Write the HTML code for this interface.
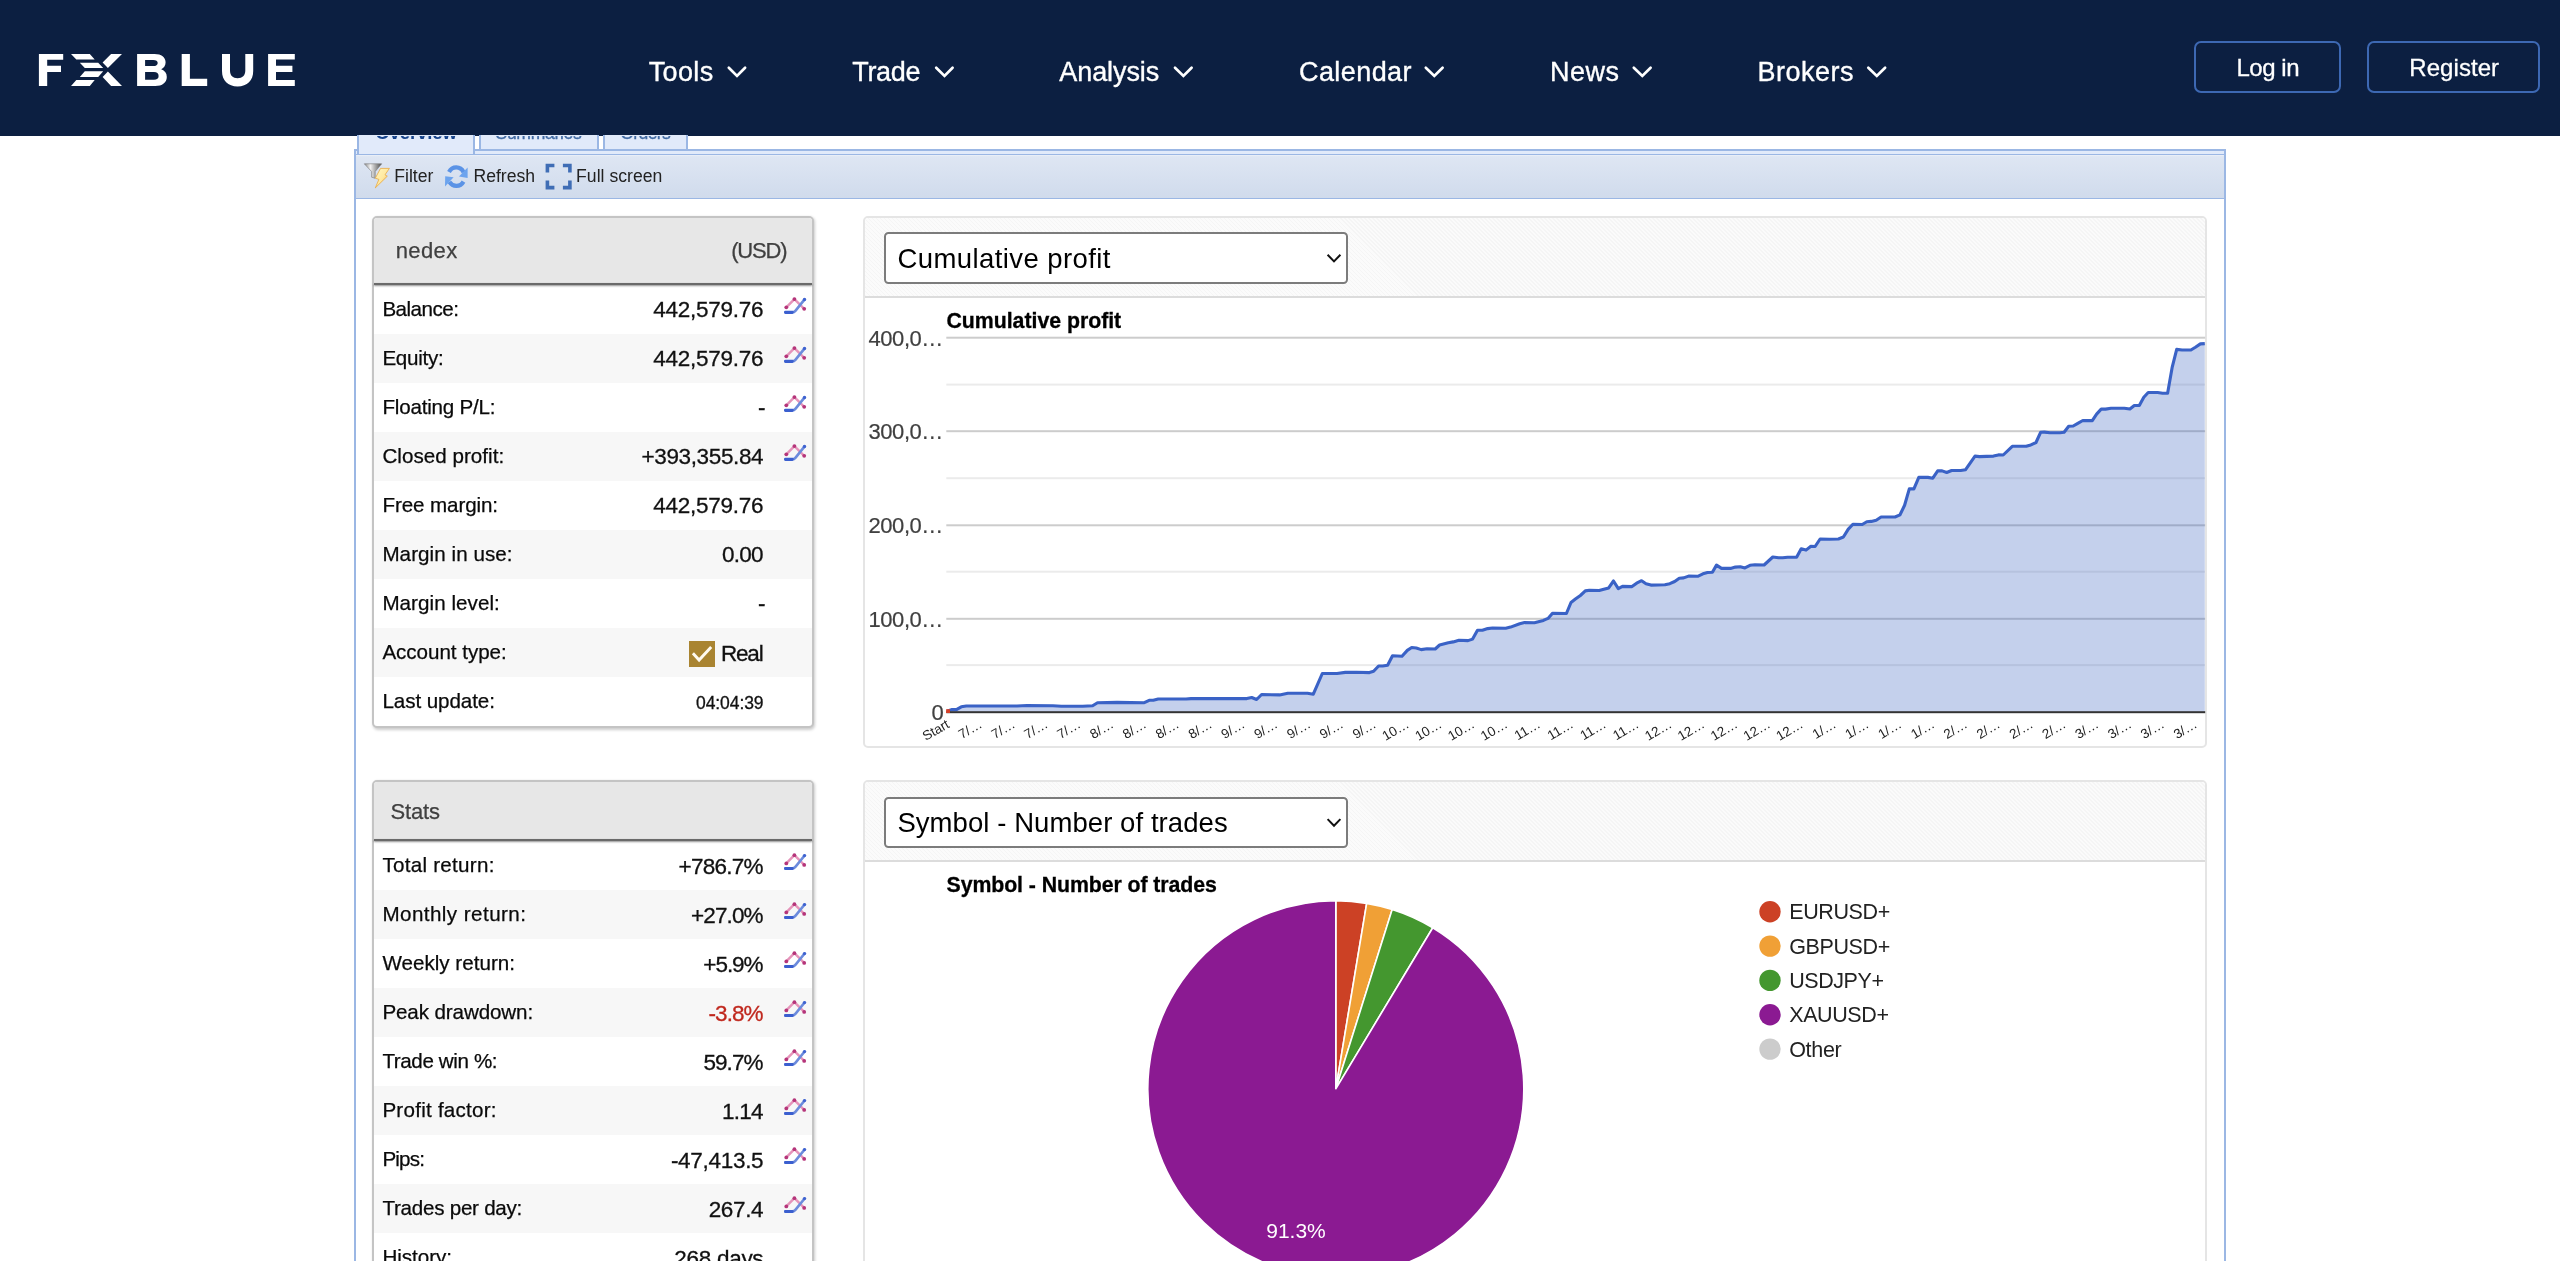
<!DOCTYPE html>
<html><head><meta charset="utf-8"><title>FX Blue - nedex</title><style>
html,body{margin:0;padding:0;background:#fff;overflow:hidden;}
body{width:2560px;height:1261px;overflow:hidden;position:relative;font-family:'Liberation Sans',sans-serif;}
.b{position:absolute;box-sizing:content-box;}
.t{position:absolute;white-space:pre;line-height:1;font-family:'Liberation Sans',sans-serif;}
svg text{font-family:'Liberation Sans',sans-serif;}
</style></head>
<body>
<div id="page" style="position:absolute;left:0;top:0;width:2560px;height:1261px;overflow:hidden;will-change:transform;background:#fff">
<div class="b" style="left:0px;top:0px;width:2560px;height:135.6px;background:#0c1f41;"></div>
<div class="t" style="left:648.70px;top:59px;font-size:27px;font-weight:400;color:#fff;letter-spacing:0.364px;-webkit-text-stroke:.35px #fff;">Tools</div>
<div class="t" style="left:852.20px;top:59px;font-size:27px;font-weight:400;color:#fff;letter-spacing:-0.281px;-webkit-text-stroke:.35px #fff;">Trade</div>
<div class="t" style="left:1059.30px;top:59px;font-size:27px;font-weight:400;color:#fff;letter-spacing:-0.087px;-webkit-text-stroke:.35px #fff;">Analysis</div>
<div class="t" style="left:1299.00px;top:59px;font-size:27px;font-weight:400;color:#fff;letter-spacing:0.421px;-webkit-text-stroke:.35px #fff;">Calendar</div>
<div class="t" style="left:1550.00px;top:59px;font-size:27px;font-weight:400;color:#fff;letter-spacing:0.500px;-webkit-text-stroke:.35px #fff;">News</div>
<div class="t" style="left:1757.50px;top:59px;font-size:27px;font-weight:400;color:#fff;letter-spacing:0.497px;-webkit-text-stroke:.35px #fff;">Brokers</div>
<div class="b" style="left:2194.4px;top:40.8px;width:142.4px;height:48.3px;border:2px solid #3d68b3;border-radius:7px;"></div>
<div class="b" style="left:2367px;top:40.8px;width:169px;height:48.3px;border:2px solid #3d68b3;border-radius:7px;"></div>
<div class="t" style="left:2236.40px;top:56px;font-size:24px;font-weight:400;color:#fff;letter-spacing:-0.460px;-webkit-text-stroke:.3px #fff;">Log in</div>
<div class="t" style="left:2409.30px;top:56px;font-size:24px;font-weight:400;color:#fff;letter-spacing:0.057px;-webkit-text-stroke:.3px #fff;">Register</div>
<div class="b" style="left:355px;top:148.9px;width:1870px;height:1.7px;background:#9bb7e4;"></div>
<div class="b" style="left:355px;top:150.6px;width:1870px;height:3.0px;background:#e1eafa;"></div>
<div class="b" style="left:355px;top:153.6px;width:1870px;height:1.7px;background:#9bb7e4;"></div>
<div class="b" style="left:357px;top:135px;width:117.5px;height:18.6px;background:#e1eafa;border-left:2px solid #9bb7e4;border-right:2px solid #9bb7e4;box-sizing:border-box;"></div>
<div class="b" style="left:478.7px;top:135px;width:120px;height:15.6px;background:#e1eafa;border:2px solid #9bb7e4;border-top:none;box-sizing:border-box;"></div>
<div class="b" style="left:603.2px;top:135px;width:85.2px;height:15.6px;background:#e1eafa;border:2px solid #9bb7e4;border-top:none;box-sizing:border-box;"></div>
<div style="position:absolute;left:0;top:135.6px;width:2560px;height:12px;overflow:hidden"><div style="position:absolute;left:0;top:-135.6px">
<div class="t" style="left:375.30px;top:124px;font-size:18.6px;font-weight:700;color:#15428b;letter-spacing:-0.153px;">Overview</div>
<div class="t" style="left:495.50px;top:125px;font-size:17.6px;font-weight:400;color:#416aa3;letter-spacing:-0.339px;-webkit-text-stroke:.3px #416aa3;">Summaries</div>
<div class="t" style="left:620.30px;top:125px;font-size:17.6px;font-weight:400;color:#416aa3;letter-spacing:-0.654px;-webkit-text-stroke:.3px #416aa3;">Orders</div>
</div></div>
<div class="b" style="left:355px;top:155.3px;width:1870px;height:42.5px;background:linear-gradient(#edf1f9 0,#dee6f3 4%,#d0dbec 100%);"></div>
<div class="b" style="left:355px;top:197.8px;width:1870px;height:1.7px;background:#9bb7e4;"></div>
<div class="b" style="left:354.1px;top:149px;width:1.9px;height:1112px;background:#9bb7e4;"></div>
<div class="b" style="left:2223.5px;top:149px;width:2px;height:1112px;background:#9bb7e4;"></div>
<div class="t" style="left:394.20px;top:168px;font-size:17.6px;font-weight:400;color:#222;letter-spacing:0.017px;">Filter</div>
<div class="t" style="left:473.60px;top:168px;font-size:17.6px;font-weight:400;color:#222;letter-spacing:-0.041px;">Refresh</div>
<div class="t" style="left:576.10px;top:168px;font-size:17.6px;font-weight:400;color:#222;letter-spacing:0.024px;">Full screen</div>
<div class="b" style="left:372px;top:216px;width:438px;height:508px;border:2px solid #c4c4c4;border-radius:5px;box-shadow:1px 1.5px 3px rgba(0,0,0,.2);background:#fff;"></div>
<div class="b" style="left:374px;top:218px;width:438px;height:65.4px;background:#e7e7e7;border-radius:3px 3px 0 0;"></div>
<div class="b" style="left:374px;top:282.79999999999995px;width:438px;height:2px;background:#6a6a6a;box-shadow:0 1px 2px rgba(0,0,0,.45);"></div>
<div class="t" style="left:395.70px;top:240px;font-size:22px;font-weight:400;color:#404040;letter-spacing:0.387px;-webkit-text-stroke:.25px #404040;">nedex</div>
<div class="t" style="left:731.20px;top:240px;font-size:22px;font-weight:400;color:#404040;letter-spacing:-1.200px;-webkit-text-stroke:.25px #404040;">(USD)</div>
<div class="t" style="left:382.40px;top:299px;font-size:20.6px;font-weight:400;color:#0a0a0a;letter-spacing:-0.512px;-webkit-text-stroke:.25px #0a0a0a;">Balance:</div>
<div class="t" style="left:653.30px;top:299px;font-size:22.5px;font-weight:400;color:#111;letter-spacing:-0.257px;-webkit-text-stroke:.3px #111;">442,579.76</div>
<div class="b" style="left:374px;top:333.59999999999997px;width:438px;height:49px;background:#f7f7f7;"></div>
<div class="t" style="left:382.40px;top:348px;font-size:20.6px;font-weight:400;color:#0a0a0a;letter-spacing:-0.264px;-webkit-text-stroke:.25px #0a0a0a;">Equity:</div>
<div class="t" style="left:653.30px;top:348px;font-size:22.5px;font-weight:400;color:#111;letter-spacing:-0.257px;-webkit-text-stroke:.3px #111;">442,579.76</div>
<div class="t" style="left:382.40px;top:397px;font-size:20.6px;font-weight:400;color:#0a0a0a;letter-spacing:-0.206px;-webkit-text-stroke:.25px #0a0a0a;">Floating P/L:</div>
<div class="t" style="left:758.00px;top:397px;font-size:22.5px;font-weight:400;color:#111;letter-spacing:0.000px;-webkit-text-stroke:.3px #111;">-</div>
<div class="b" style="left:374px;top:431.59999999999997px;width:438px;height:49px;background:#f7f7f7;"></div>
<div class="t" style="left:382.40px;top:446px;font-size:20.6px;font-weight:400;color:#0a0a0a;letter-spacing:0.032px;-webkit-text-stroke:.25px #0a0a0a;">Closed profit:</div>
<div class="t" style="left:641.50px;top:446px;font-size:22.5px;font-weight:400;color:#111;letter-spacing:-0.367px;-webkit-text-stroke:.3px #111;">+393,355.84</div>
<div class="t" style="left:382.40px;top:495px;font-size:20.6px;font-weight:400;color:#0a0a0a;letter-spacing:-0.095px;-webkit-text-stroke:.25px #0a0a0a;">Free margin:</div>
<div class="t" style="left:653.30px;top:495px;font-size:22.5px;font-weight:400;color:#111;letter-spacing:-0.257px;-webkit-text-stroke:.3px #111;">442,579.76</div>
<div class="b" style="left:374px;top:529.5999999999999px;width:438px;height:49px;background:#f7f7f7;"></div>
<div class="t" style="left:382.40px;top:544px;font-size:20.6px;font-weight:400;color:#0a0a0a;letter-spacing:0.064px;-webkit-text-stroke:.25px #0a0a0a;">Margin in use:</div>
<div class="t" style="left:721.90px;top:544px;font-size:22.5px;font-weight:400;color:#111;letter-spacing:-0.706px;-webkit-text-stroke:.3px #111;">0.00</div>
<div class="t" style="left:382.40px;top:593px;font-size:20.6px;font-weight:400;color:#0a0a0a;letter-spacing:0.050px;-webkit-text-stroke:.25px #0a0a0a;">Margin level:</div>
<div class="t" style="left:758.00px;top:593px;font-size:22.5px;font-weight:400;color:#111;letter-spacing:0.000px;-webkit-text-stroke:.3px #111;">-</div>
<div class="b" style="left:374px;top:627.5999999999999px;width:438px;height:49px;background:#f7f7f7;"></div>
<div class="t" style="left:382.40px;top:642px;font-size:20.6px;font-weight:400;color:#0a0a0a;letter-spacing:-0.036px;-webkit-text-stroke:.25px #0a0a0a;">Account type:</div>
<div class="t" style="left:721.00px;top:643px;font-size:22.5px;font-weight:400;color:#111;letter-spacing:-1.200px;-webkit-text-stroke:.3px #111;">Real</div>
<div class="t" style="left:382.40px;top:691px;font-size:20.6px;font-weight:400;color:#0a0a0a;letter-spacing:-0.073px;-webkit-text-stroke:.25px #0a0a0a;">Last update:</div>
<div class="t" style="left:696.00px;top:695px;font-size:17.5px;font-weight:400;color:#111;letter-spacing:-0.074px;-webkit-text-stroke:.3px #111;">04:04:39</div>
<div class="b" style="left:688.9px;top:641.2px;width:25.8px;height:25.8px;background:#a98431;"></div>
<div class="b" style="left:372px;top:780px;width:438px;height:596px;border:2px solid #c4c4c4;border-radius:5px;box-shadow:1px 1.5px 3px rgba(0,0,0,.2);background:#fff;"></div>
<div class="b" style="left:374px;top:782px;width:438px;height:57.5px;background:#e7e7e7;border-radius:3px 3px 0 0;"></div>
<div class="b" style="left:374px;top:838.9px;width:438px;height:2px;background:#6a6a6a;box-shadow:0 1px 2px rgba(0,0,0,.45);"></div>
<div class="t" style="left:390.50px;top:801px;font-size:22px;font-weight:400;color:#404040;letter-spacing:-0.165px;-webkit-text-stroke:.25px #404040;">Stats</div>
<div class="t" style="left:382.40px;top:855px;font-size:20.6px;font-weight:400;color:#0a0a0a;letter-spacing:0.269px;-webkit-text-stroke:.25px #0a0a0a;">Total return:</div>
<div class="t" style="left:678.60px;top:856px;font-size:22.5px;font-weight:400;color:#111;letter-spacing:-0.740px;-webkit-text-stroke:.3px #111;">+786.7%</div>
<div class="b" style="left:374px;top:889.7px;width:438px;height:49px;background:#f7f7f7;"></div>
<div class="t" style="left:382.40px;top:904px;font-size:20.6px;font-weight:400;color:#0a0a0a;letter-spacing:0.443px;-webkit-text-stroke:.25px #0a0a0a;">Monthly return:</div>
<div class="t" style="left:691.00px;top:905px;font-size:22.5px;font-weight:400;color:#111;letter-spacing:-0.870px;-webkit-text-stroke:.3px #111;">+27.0%</div>
<div class="t" style="left:382.40px;top:953px;font-size:20.6px;font-weight:400;color:#0a0a0a;letter-spacing:0.015px;-webkit-text-stroke:.25px #0a0a0a;">Weekly return:</div>
<div class="t" style="left:703.30px;top:954px;font-size:22.5px;font-weight:400;color:#111;letter-spacing:-1.027px;-webkit-text-stroke:.3px #111;">+5.9%</div>
<div class="b" style="left:374px;top:987.7px;width:438px;height:49px;background:#f7f7f7;"></div>
<div class="t" style="left:382.40px;top:1002px;font-size:20.6px;font-weight:400;color:#0a0a0a;letter-spacing:-0.114px;-webkit-text-stroke:.25px #0a0a0a;">Peak drawdown:</div>
<div class="t" style="left:708.50px;top:1003px;font-size:22.5px;font-weight:400;color:#c0281e;letter-spacing:-0.920px;-webkit-text-stroke:.3px #c0281e;">-3.8%</div>
<div class="t" style="left:382.40px;top:1051px;font-size:20.6px;font-weight:400;color:#0a0a0a;letter-spacing:-0.384px;-webkit-text-stroke:.25px #0a0a0a;">Trade win %:</div>
<div class="t" style="left:703.40px;top:1052px;font-size:22.5px;font-weight:400;color:#111;letter-spacing:-0.897px;-webkit-text-stroke:.3px #111;">59.7%</div>
<div class="b" style="left:374px;top:1085.7px;width:438px;height:49px;background:#f7f7f7;"></div>
<div class="t" style="left:382.40px;top:1100px;font-size:20.6px;font-weight:400;color:#0a0a0a;letter-spacing:0.244px;-webkit-text-stroke:.25px #0a0a0a;">Profit factor:</div>
<div class="t" style="left:722.10px;top:1101px;font-size:22.5px;font-weight:400;color:#111;letter-spacing:-0.773px;-webkit-text-stroke:.3px #111;">1.14</div>
<div class="t" style="left:382.40px;top:1149px;font-size:20.6px;font-weight:400;color:#0a0a0a;letter-spacing:-0.796px;-webkit-text-stroke:.25px #0a0a0a;">Pips:</div>
<div class="t" style="left:670.90px;top:1150px;font-size:22.5px;font-weight:400;color:#111;letter-spacing:-0.295px;-webkit-text-stroke:.3px #111;">-47,413.5</div>
<div class="b" style="left:374px;top:1183.7px;width:438px;height:49px;background:#f7f7f7;"></div>
<div class="t" style="left:382.40px;top:1198px;font-size:20.6px;font-weight:400;color:#0a0a0a;letter-spacing:-0.252px;-webkit-text-stroke:.25px #0a0a0a;">Trades per day:</div>
<div class="t" style="left:708.70px;top:1199px;font-size:22.5px;font-weight:400;color:#111;letter-spacing:-0.352px;-webkit-text-stroke:.3px #111;">267.4</div>
<div class="t" style="left:382.40px;top:1247px;font-size:20.6px;font-weight:400;color:#0a0a0a;letter-spacing:-0.019px;-webkit-text-stroke:.25px #0a0a0a;">History:</div>
<div class="t" style="left:674.30px;top:1248px;font-size:22.5px;font-weight:400;color:#111;letter-spacing:-0.285px;-webkit-text-stroke:.3px #111;">268 days</div>
<div class="b" style="left:863px;top:216px;width:1340px;height:527.6px;border:2px solid #e5e5e5;border-radius:5px;background:#fff;"></div>
<div class="b" style="left:865px;top:218px;width:1340px;height:78.19999999999999px;background:repeating-linear-gradient(45deg,#f5f5f5 0,#f5f5f5 1.2px,#fbfbfb 1.2px,#fbfbfb 2.83px);border-bottom:2px solid #dcdcdc;border-radius:3px 3px 0 0;"></div>
<div class="b" style="left:884.4px;top:232px;width:459.8px;height:48px;border:2px solid #7c7c7c;border-radius:4.5px;background:#fff;"></div>
<div class="t" style="left:897.40px;top:245px;font-size:27.5px;font-weight:400;color:#000;letter-spacing:0.418px;">Cumulative profit</div>
<div class="b" style="left:863px;top:780px;width:1340px;height:596px;border:2px solid #e5e5e5;border-radius:5px;background:#fff;"></div>
<div class="b" style="left:865px;top:782px;width:1340px;height:78.39999999999998px;background:repeating-linear-gradient(45deg,#f5f5f5 0,#f5f5f5 1.2px,#fbfbfb 1.2px,#fbfbfb 2.83px);border-bottom:2px solid #dcdcdc;border-radius:3px 3px 0 0;"></div>
<div class="b" style="left:884.4px;top:796.6px;width:459.8px;height:47.39999999999998px;border:2px solid #7c7c7c;border-radius:4.5px;background:#fff;"></div>
<div class="t" style="left:897.40px;top:809px;font-size:27.5px;font-weight:400;color:#000;letter-spacing:0.070px;">Symbol - Number of trades</div>
<div class="t" style="left:946.50px;top:311px;font-size:21.3px;font-weight:700;color:#000;letter-spacing:-0.027px;-webkit-text-stroke:.3px #000;">Cumulative profit</div>
<div class="t" style="left:946.50px;top:875px;font-size:21.3px;font-weight:700;color:#000;letter-spacing:-0.076px;-webkit-text-stroke:.3px #000;">Symbol - Number of trades</div>
<div class="t" style="left:868.60px;top:328px;font-size:22px;font-weight:400;color:#404040;letter-spacing:-0.471px;-webkit-text-stroke:.2px #404040;">400,0…</div>
<div class="t" style="left:868.60px;top:421px;font-size:22px;font-weight:400;color:#404040;letter-spacing:-0.471px;-webkit-text-stroke:.2px #404040;">300,0…</div>
<div class="t" style="left:868.60px;top:515px;font-size:22px;font-weight:400;color:#404040;letter-spacing:-0.471px;-webkit-text-stroke:.2px #404040;">200,0…</div>
<div class="t" style="left:868.60px;top:609px;font-size:22px;font-weight:400;color:#404040;letter-spacing:-0.471px;-webkit-text-stroke:.2px #404040;">100,0…</div>
<div class="t" style="left:931.40px;top:702px;font-size:22px;font-weight:400;color:#404040;letter-spacing:0.000px;-webkit-text-stroke:.2px #404040;">0</div>
<div class="t" style="left:1789.20px;top:902px;font-size:21.5px;font-weight:400;color:#222;letter-spacing:-0.377px;">EURUSD+</div>
<div class="t" style="left:1789.20px;top:937px;font-size:21.5px;font-weight:400;color:#222;letter-spacing:-0.377px;">GBPUSD+</div>
<div class="t" style="left:1789.20px;top:971px;font-size:21.5px;font-weight:400;color:#222;letter-spacing:-0.433px;">USDJPY+</div>
<div class="t" style="left:1789.20px;top:1005px;font-size:21.5px;font-weight:400;color:#222;letter-spacing:-0.396px;">XAUUSD+</div>
<div class="t" style="left:1789.20px;top:1040px;font-size:21.5px;font-weight:400;color:#222;letter-spacing:-0.312px;">Other</div>
<svg style="position:absolute;left:0;top:0" width="2560" height="1261" viewBox="0 0 2560 1261">
<path fill="#fff" fill-rule="evenodd" d="M38.9 53.9H63.2V59.7H47.2V65.8H61V72.1H47.2V85.9H38.9Z M71 54.1H89.8L94.7 59.6H76.3Z M79.8 62.8H98.2L103.2 68.1H84.8Z M84.8 71.3H103.2L98.2 76.9H79.8Z M76.3 80.1H94.7L89.8 85.9H71Z M111.1 54.1H122L107.9 68L102.6 62.6Z M102.6 76.9L107.9 71.6L122 85.9H111.1Z M137.1 53.9H154.5C161.5 53.9 165.6 57.3 165.6 62.3C165.6 65.6 164 68 161.2 69.2C164.9 70.4 166.8 73.2 166.8 76.9C166.8 82.5 162.3 85.9 155.2 85.9H137.1ZM145.1 59.9V66.1H153.2C156.1 66.1 157.7 65 157.7 63C157.7 61 156.1 59.9 153.2 59.9ZM145.1 72.1V79.8H154C157 79.8 158.6 78.5 158.6 76C158.6 73.5 157 72.1 154 72.1Z M181.7 53.9H189.9V78.7H207.2V85.9H181.7Z M222 53.9H230V70.5C230 75.5 232.8 78.2 237.6 78.2C242.4 78.2 245.3 75.5 245.3 70.5V53.9H253.2V71C253.2 80.5 247.3 86.4 237.6 86.4C227.9 86.4 222 80.5 222 71Z M268.1 53.9H294.8V59.6H276V65.8H292.4V72.1H276V80H294.8V85.9H268.1Z"/>
<polyline points="728.8,67.7 737.0,75.9 745.1,67.7" fill="none" stroke="#fff" stroke-width="2.7" stroke-linecap="round" stroke-linejoin="miter"/>
<polyline points="936.2,67.7 944.5,75.9 952.6,67.7" fill="none" stroke="#fff" stroke-width="2.7" stroke-linecap="round" stroke-linejoin="miter"/>
<polyline points="1175.0,67.7 1183.4,75.9 1191.6,67.7" fill="none" stroke="#fff" stroke-width="2.7" stroke-linecap="round" stroke-linejoin="miter"/>
<polyline points="1425.8,67.7 1434.3,75.9 1442.6,67.7" fill="none" stroke="#fff" stroke-width="2.7" stroke-linecap="round" stroke-linejoin="miter"/>
<polyline points="1633.8,67.7 1642.3,75.9 1650.6,67.7" fill="none" stroke="#fff" stroke-width="2.7" stroke-linecap="round" stroke-linejoin="miter"/>
<polyline points="1868.3,67.7 1876.8,75.9 1885.1,67.7" fill="none" stroke="#fff" stroke-width="2.7" stroke-linecap="round" stroke-linejoin="miter"/>
<defs><linearGradient id="fg" x1="0" x2="1"><stop offset="0" stop-color="#8a8a8a"/><stop offset=".35" stop-color="#f2f2f2"/><stop offset="1" stop-color="#4a4a4a"/></linearGradient><linearGradient id="lg" x1="0" x2="1" y1="0" y2="1"><stop offset="0" stop-color="#fff6c0"/><stop offset=".5" stop-color="#ffe9a0"/><stop offset="1" stop-color="#f5a030"/></linearGradient></defs>
<path d="M364.3 163.8H381.7L375.2 171.5V178.3L371.6 177.2V171.5Z" fill="url(#fg)" stroke="#777" stroke-width=".6"/>
<path d="M380.5 168.4H389.4L385 174.8L387.3 176.2L375.3 187.9L378.9 179.4L375.3 178.2Z" fill="url(#lg)" stroke="#e8a840" stroke-width=".8"/>
<g fill="none" stroke="#5b93e6" stroke-width="4.2"><path d="M449.0 172.0A8.4 9.2 0 0 1 463.6 172.2"/><path d="M463.5 181.6A8.4 9.2 0 0 1 449.4 181.9"/></g><path d="M459 176.6L467.6 167.6L467.6 178Z" fill="#6da4ee"/><path d="M453.6 177.2L445 186.6L445.2 176.2Z" fill="#6da4ee"/>
<path d="M547.4 172.5V165.5H554.4 M562.9 165.5H569.9V172.5 M569.9 180.6V187.6H562.9 M554.4 187.6H547.4V180.6" fill="none" stroke="#3f6db5" stroke-width="3.6"/>
<g fill="none" stroke-linecap="round" stroke-linejoin="round"><polyline points="786.3,307.29999999999995 794.4,299.09999999999997 804.2,308.79999999999995" stroke="#e594ba" stroke-width="2.4"/><path d="M785.4 312.29999999999995H792.2Q794.2 312.29999999999995 795.6 310.59999999999997L804.6 299.3999999999999" stroke="#6c8bdc" stroke-width="2.6"/></g><circle cx="786.3" cy="307.29999999999995" r="1.9" fill="#b5357a"/><circle cx="794.4" cy="299.09999999999997" r="1.9" fill="#b5357a"/><circle cx="804.2" cy="308.79999999999995" r="1.9" fill="#b5357a"/><circle cx="804.5" cy="299.49999999999994" r="1.7" fill="#3f63d0"/><rect x="784.1" y="310.79999999999995" width="9.6" height="3.1" rx="1.3" fill="#3b5fcf"/>
<g fill="none" stroke-linecap="round" stroke-linejoin="round"><polyline points="786.3,356.29999999999995 794.4,348.09999999999997 804.2,357.79999999999995" stroke="#e594ba" stroke-width="2.4"/><path d="M785.4 361.29999999999995H792.2Q794.2 361.29999999999995 795.6 359.59999999999997L804.6 348.3999999999999" stroke="#6c8bdc" stroke-width="2.6"/></g><circle cx="786.3" cy="356.29999999999995" r="1.9" fill="#b5357a"/><circle cx="794.4" cy="348.09999999999997" r="1.9" fill="#b5357a"/><circle cx="804.2" cy="357.79999999999995" r="1.9" fill="#b5357a"/><circle cx="804.5" cy="348.49999999999994" r="1.7" fill="#3f63d0"/><rect x="784.1" y="359.79999999999995" width="9.6" height="3.1" rx="1.3" fill="#3b5fcf"/>
<g fill="none" stroke-linecap="round" stroke-linejoin="round"><polyline points="786.3,405.29999999999995 794.4,397.09999999999997 804.2,406.79999999999995" stroke="#e594ba" stroke-width="2.4"/><path d="M785.4 410.29999999999995H792.2Q794.2 410.29999999999995 795.6 408.59999999999997L804.6 397.3999999999999" stroke="#6c8bdc" stroke-width="2.6"/></g><circle cx="786.3" cy="405.29999999999995" r="1.9" fill="#b5357a"/><circle cx="794.4" cy="397.09999999999997" r="1.9" fill="#b5357a"/><circle cx="804.2" cy="406.79999999999995" r="1.9" fill="#b5357a"/><circle cx="804.5" cy="397.49999999999994" r="1.7" fill="#3f63d0"/><rect x="784.1" y="408.79999999999995" width="9.6" height="3.1" rx="1.3" fill="#3b5fcf"/>
<g fill="none" stroke-linecap="round" stroke-linejoin="round"><polyline points="786.3,454.29999999999995 794.4,446.09999999999997 804.2,455.79999999999995" stroke="#e594ba" stroke-width="2.4"/><path d="M785.4 459.29999999999995H792.2Q794.2 459.29999999999995 795.6 457.59999999999997L804.6 446.3999999999999" stroke="#6c8bdc" stroke-width="2.6"/></g><circle cx="786.3" cy="454.29999999999995" r="1.9" fill="#b5357a"/><circle cx="794.4" cy="446.09999999999997" r="1.9" fill="#b5357a"/><circle cx="804.2" cy="455.79999999999995" r="1.9" fill="#b5357a"/><circle cx="804.5" cy="446.49999999999994" r="1.7" fill="#3f63d0"/><rect x="784.1" y="457.79999999999995" width="9.6" height="3.1" rx="1.3" fill="#3b5fcf"/>
<polyline points="692.9,653.2 699.1,660.0 711.2,646.9" fill="none" stroke="#fffaf0" stroke-width="2.9" stroke-linejoin="miter"/>
<g fill="none" stroke-linecap="round" stroke-linejoin="round"><polyline points="786.3,863.4 794.4,855.2 804.2,864.9" stroke="#e594ba" stroke-width="2.4"/><path d="M785.4 868.4H792.2Q794.2 868.4 795.6 866.7L804.6 855.5" stroke="#6c8bdc" stroke-width="2.6"/></g><circle cx="786.3" cy="863.4" r="1.9" fill="#b5357a"/><circle cx="794.4" cy="855.2" r="1.9" fill="#b5357a"/><circle cx="804.2" cy="864.9" r="1.9" fill="#b5357a"/><circle cx="804.5" cy="855.6" r="1.7" fill="#3f63d0"/><rect x="784.1" y="866.9" width="9.6" height="3.1" rx="1.3" fill="#3b5fcf"/>
<g fill="none" stroke-linecap="round" stroke-linejoin="round"><polyline points="786.3,912.4 794.4,904.2 804.2,913.9" stroke="#e594ba" stroke-width="2.4"/><path d="M785.4 917.4H792.2Q794.2 917.4 795.6 915.7L804.6 904.5" stroke="#6c8bdc" stroke-width="2.6"/></g><circle cx="786.3" cy="912.4" r="1.9" fill="#b5357a"/><circle cx="794.4" cy="904.2" r="1.9" fill="#b5357a"/><circle cx="804.2" cy="913.9" r="1.9" fill="#b5357a"/><circle cx="804.5" cy="904.6" r="1.7" fill="#3f63d0"/><rect x="784.1" y="915.9" width="9.6" height="3.1" rx="1.3" fill="#3b5fcf"/>
<g fill="none" stroke-linecap="round" stroke-linejoin="round"><polyline points="786.3,961.4 794.4,953.2 804.2,962.9" stroke="#e594ba" stroke-width="2.4"/><path d="M785.4 966.4H792.2Q794.2 966.4 795.6 964.7L804.6 953.5" stroke="#6c8bdc" stroke-width="2.6"/></g><circle cx="786.3" cy="961.4" r="1.9" fill="#b5357a"/><circle cx="794.4" cy="953.2" r="1.9" fill="#b5357a"/><circle cx="804.2" cy="962.9" r="1.9" fill="#b5357a"/><circle cx="804.5" cy="953.6" r="1.7" fill="#3f63d0"/><rect x="784.1" y="964.9" width="9.6" height="3.1" rx="1.3" fill="#3b5fcf"/>
<g fill="none" stroke-linecap="round" stroke-linejoin="round"><polyline points="786.3,1010.4 794.4,1002.2 804.2,1011.9" stroke="#e594ba" stroke-width="2.4"/><path d="M785.4 1015.4H792.2Q794.2 1015.4 795.6 1013.7L804.6 1002.5" stroke="#6c8bdc" stroke-width="2.6"/></g><circle cx="786.3" cy="1010.4" r="1.9" fill="#b5357a"/><circle cx="794.4" cy="1002.2" r="1.9" fill="#b5357a"/><circle cx="804.2" cy="1011.9" r="1.9" fill="#b5357a"/><circle cx="804.5" cy="1002.6" r="1.7" fill="#3f63d0"/><rect x="784.1" y="1013.9" width="9.6" height="3.1" rx="1.3" fill="#3b5fcf"/>
<g fill="none" stroke-linecap="round" stroke-linejoin="round"><polyline points="786.3,1059.4 794.4,1051.2 804.2,1060.9" stroke="#e594ba" stroke-width="2.4"/><path d="M785.4 1064.4H792.2Q794.2 1064.4 795.6 1062.7L804.6 1051.5000000000002" stroke="#6c8bdc" stroke-width="2.6"/></g><circle cx="786.3" cy="1059.4" r="1.9" fill="#b5357a"/><circle cx="794.4" cy="1051.2" r="1.9" fill="#b5357a"/><circle cx="804.2" cy="1060.9" r="1.9" fill="#b5357a"/><circle cx="804.5" cy="1051.6000000000001" r="1.7" fill="#3f63d0"/><rect x="784.1" y="1062.9" width="9.6" height="3.1" rx="1.3" fill="#3b5fcf"/>
<g fill="none" stroke-linecap="round" stroke-linejoin="round"><polyline points="786.3,1108.4 794.4,1100.2 804.2,1109.9" stroke="#e594ba" stroke-width="2.4"/><path d="M785.4 1113.4H792.2Q794.2 1113.4 795.6 1111.7L804.6 1100.5000000000002" stroke="#6c8bdc" stroke-width="2.6"/></g><circle cx="786.3" cy="1108.4" r="1.9" fill="#b5357a"/><circle cx="794.4" cy="1100.2" r="1.9" fill="#b5357a"/><circle cx="804.2" cy="1109.9" r="1.9" fill="#b5357a"/><circle cx="804.5" cy="1100.6000000000001" r="1.7" fill="#3f63d0"/><rect x="784.1" y="1111.9" width="9.6" height="3.1" rx="1.3" fill="#3b5fcf"/>
<g fill="none" stroke-linecap="round" stroke-linejoin="round"><polyline points="786.3,1157.4 794.4,1149.2 804.2,1158.9" stroke="#e594ba" stroke-width="2.4"/><path d="M785.4 1162.4H792.2Q794.2 1162.4 795.6 1160.7L804.6 1149.5000000000002" stroke="#6c8bdc" stroke-width="2.6"/></g><circle cx="786.3" cy="1157.4" r="1.9" fill="#b5357a"/><circle cx="794.4" cy="1149.2" r="1.9" fill="#b5357a"/><circle cx="804.2" cy="1158.9" r="1.9" fill="#b5357a"/><circle cx="804.5" cy="1149.6000000000001" r="1.7" fill="#3f63d0"/><rect x="784.1" y="1160.9" width="9.6" height="3.1" rx="1.3" fill="#3b5fcf"/>
<g fill="none" stroke-linecap="round" stroke-linejoin="round"><polyline points="786.3,1206.4 794.4,1198.2 804.2,1207.9" stroke="#e594ba" stroke-width="2.4"/><path d="M785.4 1211.4H792.2Q794.2 1211.4 795.6 1209.7L804.6 1198.5000000000002" stroke="#6c8bdc" stroke-width="2.6"/></g><circle cx="786.3" cy="1206.4" r="1.9" fill="#b5357a"/><circle cx="794.4" cy="1198.2" r="1.9" fill="#b5357a"/><circle cx="804.2" cy="1207.9" r="1.9" fill="#b5357a"/><circle cx="804.5" cy="1198.6000000000001" r="1.7" fill="#3f63d0"/><rect x="784.1" y="1209.9" width="9.6" height="3.1" rx="1.3" fill="#3b5fcf"/>
<polyline points="1327.6,254.8 1334,261.4 1340.4,254.8" fill="none" stroke="#111" stroke-width="2" />
<polyline points="1327.6,819.1 1334,825.7 1340.4,819.1" fill="none" stroke="#111" stroke-width="2" />
<rect x="946.3" y="383.6" width="1258.8999999999999" height="2" fill="#ebebeb"/>
<rect x="946.3" y="477.2" width="1258.8999999999999" height="2" fill="#ebebeb"/>
<rect x="946.3" y="570.7" width="1258.8999999999999" height="2" fill="#ebebeb"/>
<rect x="946.3" y="664.1" width="1258.8999999999999" height="2" fill="#ebebeb"/>
<rect x="946.3" y="336.7" width="1258.8999999999999" height="2" fill="#cccccc"/>
<rect x="946.3" y="430.2" width="1258.8999999999999" height="2" fill="#cccccc"/>
<rect x="946.3" y="524.3" width="1258.8999999999999" height="2" fill="#cccccc"/>
<rect x="946.3" y="617.8" width="1258.8999999999999" height="2" fill="#cccccc"/>
<polygon points="947.4,712.2 947.4,711 951.5,709.6 956.4,709.6 961.3,706.8 966.3,706 1017,706 1027,705.5 1053,705.7 1061.4,706.3 1082.7,706.3 1092.6,705.7 1097.5,702.7 1117,702.4 1144.3,702.7 1149.2,700.3 1153.3,700.3 1158.2,699 1186,699 1191,698.6 1246.8,698.6 1251.7,697.5 1256.6,699.5 1261.6,694.5 1279.6,694.9 1287.8,693.2 1307.5,693.2 1313.3,694.2 1322.3,673.5 1337,673.5 1345.3,672.4 1356.4,672.3 1369.5,672.6 1373.6,671.3 1378.6,666 1382.7,666 1387.6,665.2 1392.5,655.8 1402,656.2 1407.3,650.4 1411.7,647.5 1416.3,648 1421.2,649.6 1427,648.8 1435.2,649 1439.6,645 1448.3,642.7 1453.2,641.9 1459,640.3 1468,640.6 1472.6,639.1 1477.5,630.3 1482.4,630.3 1487.7,628.6 1492.6,628 1505.7,628.3 1510.6,627.1 1519.7,623.7 1524.6,622.5 1534.4,622.7 1543.4,620.4 1548,618.4 1552.5,613.2 1566.4,613.5 1571,602.5 1575.4,599.1 1580.4,595.5 1585.3,590.9 1589.4,590.2 1599.2,590.5 1603.8,589.2 1608.7,587.9 1613.5,581 1618.3,588.6 1622.5,586.4 1632,586.6 1636.6,583.2 1641.6,580.7 1646,583.7 1650.9,585.1 1664.9,584.8 1669.8,583.7 1674.7,581.5 1679.3,578.2 1683.7,577.9 1688.6,576.1 1697.7,576.3 1702.9,573.8 1707.5,572.5 1712.4,572.2 1716.5,565.1 1721.5,568.4 1730.5,568.4 1735.4,567.1 1740.3,566.7 1744.9,567.9 1750,565.3 1755,564.7 1764.1,565 1772.8,557 1778.6,557.8 1782.7,557.8 1787.6,557.2 1796.6,557.3 1801.2,548.8 1806,550.1 1810.9,546.3 1815.1,546.5 1820.1,539 1829.4,539.3 1838.4,539 1843.4,537 1848.3,529.1 1852.9,524.2 1862.2,524.5 1866.8,521.7 1871.3,521.4 1876.2,520.2 1881.1,517 1895,517 1900,514.8 1904.6,505.3 1909.3,488.9 1913.9,488.9 1918.8,477.4 1927.9,477.4 1932.8,478.2 1937.7,470.9 1942.1,470.9 1946.7,472.5 1951.6,470.5 1960.7,470.5 1965.6,469.7 1975,456.1 1979.5,456.6 1993.5,456.1 1998.4,454.9 2003.2,455 2012.3,446.3 2026.2,446.3 2030.8,444.9 2036,442.5 2040.6,432.3 2044.4,432.1 2050,432.7 2060,432.7 2064.1,432.3 2068.7,426.3 2073.2,426 2077.8,423.3 2082.8,420.5 2092.3,420.6 2096.6,414.1 2101.2,409.1 2105.5,409.1 2111,408.3 2124.3,408.3 2129.9,409 2134.3,405.5 2139.3,405.5 2143.8,397.2 2148.2,392.5 2157.6,392.5 2162.6,393.3 2167.6,393.3 2172.1,367.7 2176.7,349.4 2182.1,350 2190.9,350 2195.4,347.2 2200.4,343.9 2204.8,343.6 2204.8,712.2" fill="#3a62c0" fill-opacity=".3"/>
<polyline points="947.4,711 951.5,709.6 956.4,709.6 961.3,706.8 966.3,706 1017,706 1027,705.5 1053,705.7 1061.4,706.3 1082.7,706.3 1092.6,705.7 1097.5,702.7 1117,702.4 1144.3,702.7 1149.2,700.3 1153.3,700.3 1158.2,699 1186,699 1191,698.6 1246.8,698.6 1251.7,697.5 1256.6,699.5 1261.6,694.5 1279.6,694.9 1287.8,693.2 1307.5,693.2 1313.3,694.2 1322.3,673.5 1337,673.5 1345.3,672.4 1356.4,672.3 1369.5,672.6 1373.6,671.3 1378.6,666 1382.7,666 1387.6,665.2 1392.5,655.8 1402,656.2 1407.3,650.4 1411.7,647.5 1416.3,648 1421.2,649.6 1427,648.8 1435.2,649 1439.6,645 1448.3,642.7 1453.2,641.9 1459,640.3 1468,640.6 1472.6,639.1 1477.5,630.3 1482.4,630.3 1487.7,628.6 1492.6,628 1505.7,628.3 1510.6,627.1 1519.7,623.7 1524.6,622.5 1534.4,622.7 1543.4,620.4 1548,618.4 1552.5,613.2 1566.4,613.5 1571,602.5 1575.4,599.1 1580.4,595.5 1585.3,590.9 1589.4,590.2 1599.2,590.5 1603.8,589.2 1608.7,587.9 1613.5,581 1618.3,588.6 1622.5,586.4 1632,586.6 1636.6,583.2 1641.6,580.7 1646,583.7 1650.9,585.1 1664.9,584.8 1669.8,583.7 1674.7,581.5 1679.3,578.2 1683.7,577.9 1688.6,576.1 1697.7,576.3 1702.9,573.8 1707.5,572.5 1712.4,572.2 1716.5,565.1 1721.5,568.4 1730.5,568.4 1735.4,567.1 1740.3,566.7 1744.9,567.9 1750,565.3 1755,564.7 1764.1,565 1772.8,557 1778.6,557.8 1782.7,557.8 1787.6,557.2 1796.6,557.3 1801.2,548.8 1806,550.1 1810.9,546.3 1815.1,546.5 1820.1,539 1829.4,539.3 1838.4,539 1843.4,537 1848.3,529.1 1852.9,524.2 1862.2,524.5 1866.8,521.7 1871.3,521.4 1876.2,520.2 1881.1,517 1895,517 1900,514.8 1904.6,505.3 1909.3,488.9 1913.9,488.9 1918.8,477.4 1927.9,477.4 1932.8,478.2 1937.7,470.9 1942.1,470.9 1946.7,472.5 1951.6,470.5 1960.7,470.5 1965.6,469.7 1975,456.1 1979.5,456.6 1993.5,456.1 1998.4,454.9 2003.2,455 2012.3,446.3 2026.2,446.3 2030.8,444.9 2036,442.5 2040.6,432.3 2044.4,432.1 2050,432.7 2060,432.7 2064.1,432.3 2068.7,426.3 2073.2,426 2077.8,423.3 2082.8,420.5 2092.3,420.6 2096.6,414.1 2101.2,409.1 2105.5,409.1 2111,408.3 2124.3,408.3 2129.9,409 2134.3,405.5 2139.3,405.5 2143.8,397.2 2148.2,392.5 2157.6,392.5 2162.6,393.3 2167.6,393.3 2172.1,367.7 2176.7,349.4 2182.1,350 2190.9,350 2195.4,347.2 2200.4,343.9 2204.8,343.6" fill="none" stroke="#3a62c6" stroke-width="3.1" stroke-linejoin="round"/>
<rect x="946.3" y="711.2" width="1258.8999999999999" height="2" fill="#333"/>
<rect x="946.1" y="709.2" width="3.9" height="3.8" fill="#d7412a"/>
<text x="950.3" y="726.9" text-anchor="end" transform="rotate(-30 950.3 726.9)" font-size="13.4" fill="#222">Start</text>
<text x="983.1" y="726.9" text-anchor="end" transform="rotate(-30 983.1 726.9)" font-size="13.4" fill="#222">7/…</text>
<text x="1016.0" y="726.9" text-anchor="end" transform="rotate(-30 1016.0 726.9)" font-size="13.4" fill="#222">7/…</text>
<text x="1048.8" y="726.9" text-anchor="end" transform="rotate(-30 1048.8 726.9)" font-size="13.4" fill="#222">7/…</text>
<text x="1081.7" y="726.9" text-anchor="end" transform="rotate(-30 1081.7 726.9)" font-size="13.4" fill="#222">7/…</text>
<text x="1114.5" y="726.9" text-anchor="end" transform="rotate(-30 1114.5 726.9)" font-size="13.4" fill="#222">8/…</text>
<text x="1147.3" y="726.9" text-anchor="end" transform="rotate(-30 1147.3 726.9)" font-size="13.4" fill="#222">8/…</text>
<text x="1180.2" y="726.9" text-anchor="end" transform="rotate(-30 1180.2 726.9)" font-size="13.4" fill="#222">8/…</text>
<text x="1213.0" y="726.9" text-anchor="end" transform="rotate(-30 1213.0 726.9)" font-size="13.4" fill="#222">8/…</text>
<text x="1245.9" y="726.9" text-anchor="end" transform="rotate(-30 1245.9 726.9)" font-size="13.4" fill="#222">9/…</text>
<text x="1278.7" y="726.9" text-anchor="end" transform="rotate(-30 1278.7 726.9)" font-size="13.4" fill="#222">9/…</text>
<text x="1311.5" y="726.9" text-anchor="end" transform="rotate(-30 1311.5 726.9)" font-size="13.4" fill="#222">9/…</text>
<text x="1344.4" y="726.9" text-anchor="end" transform="rotate(-30 1344.4 726.9)" font-size="13.4" fill="#222">9/…</text>
<text x="1377.2" y="726.9" text-anchor="end" transform="rotate(-30 1377.2 726.9)" font-size="13.4" fill="#222">9/…</text>
<text x="1410.1" y="726.9" text-anchor="end" transform="rotate(-30 1410.1 726.9)" font-size="13.4" fill="#222">10…</text>
<text x="1442.9" y="726.9" text-anchor="end" transform="rotate(-30 1442.9 726.9)" font-size="13.4" fill="#222">10…</text>
<text x="1475.7" y="726.9" text-anchor="end" transform="rotate(-30 1475.7 726.9)" font-size="13.4" fill="#222">10…</text>
<text x="1508.6" y="726.9" text-anchor="end" transform="rotate(-30 1508.6 726.9)" font-size="13.4" fill="#222">10…</text>
<text x="1541.4" y="726.9" text-anchor="end" transform="rotate(-30 1541.4 726.9)" font-size="13.4" fill="#222">11…</text>
<text x="1574.3" y="726.9" text-anchor="end" transform="rotate(-30 1574.3 726.9)" font-size="13.4" fill="#222">11…</text>
<text x="1607.1" y="726.9" text-anchor="end" transform="rotate(-30 1607.1 726.9)" font-size="13.4" fill="#222">11…</text>
<text x="1639.9" y="726.9" text-anchor="end" transform="rotate(-30 1639.9 726.9)" font-size="13.4" fill="#222">11…</text>
<text x="1672.8" y="726.9" text-anchor="end" transform="rotate(-30 1672.8 726.9)" font-size="13.4" fill="#222">12…</text>
<text x="1705.6" y="726.9" text-anchor="end" transform="rotate(-30 1705.6 726.9)" font-size="13.4" fill="#222">12…</text>
<text x="1738.5" y="726.9" text-anchor="end" transform="rotate(-30 1738.5 726.9)" font-size="13.4" fill="#222">12…</text>
<text x="1771.3" y="726.9" text-anchor="end" transform="rotate(-30 1771.3 726.9)" font-size="13.4" fill="#222">12…</text>
<text x="1804.1" y="726.9" text-anchor="end" transform="rotate(-30 1804.1 726.9)" font-size="13.4" fill="#222">12…</text>
<text x="1837.0" y="726.9" text-anchor="end" transform="rotate(-30 1837.0 726.9)" font-size="13.4" fill="#222">1/…</text>
<text x="1869.8" y="726.9" text-anchor="end" transform="rotate(-30 1869.8 726.9)" font-size="13.4" fill="#222">1/…</text>
<text x="1902.7" y="726.9" text-anchor="end" transform="rotate(-30 1902.7 726.9)" font-size="13.4" fill="#222">1/…</text>
<text x="1935.5" y="726.9" text-anchor="end" transform="rotate(-30 1935.5 726.9)" font-size="13.4" fill="#222">1/…</text>
<text x="1968.3" y="726.9" text-anchor="end" transform="rotate(-30 1968.3 726.9)" font-size="13.4" fill="#222">2/…</text>
<text x="2001.2" y="726.9" text-anchor="end" transform="rotate(-30 2001.2 726.9)" font-size="13.4" fill="#222">2/…</text>
<text x="2034.0" y="726.9" text-anchor="end" transform="rotate(-30 2034.0 726.9)" font-size="13.4" fill="#222">2/…</text>
<text x="2066.9" y="726.9" text-anchor="end" transform="rotate(-30 2066.9 726.9)" font-size="13.4" fill="#222">2/…</text>
<text x="2099.7" y="726.9" text-anchor="end" transform="rotate(-30 2099.7 726.9)" font-size="13.4" fill="#222">3/…</text>
<text x="2132.5" y="726.9" text-anchor="end" transform="rotate(-30 2132.5 726.9)" font-size="13.4" fill="#222">3/…</text>
<text x="2165.4" y="726.9" text-anchor="end" transform="rotate(-30 2165.4 726.9)" font-size="13.4" fill="#222">3/…</text>
<text x="2198.2" y="726.9" text-anchor="end" transform="rotate(-30 2198.2 726.9)" font-size="13.4" fill="#222">3/…</text>
<path d="M1335.8,1088.8L1335.80,900.80A188.0,188.0 0 0 1 1366.67,903.35Z" fill="#cc4125" stroke="#fff" stroke-width="1.6" stroke-linejoin="round"/>
<path d="M1335.8,1088.8L1366.67,903.35A188.0,188.0 0 0 1 1392.18,909.45Z" fill="#f0a036" stroke="#fff" stroke-width="1.6" stroke-linejoin="round"/>
<path d="M1335.8,1088.8L1392.18,909.45A188.0,188.0 0 0 1 1432.77,927.74Z" fill="#44972f" stroke="#fff" stroke-width="1.6" stroke-linejoin="round"/>
<path d="M1335.8,1088.8L1432.77,927.74A188.0,188.0 0 1 1 1335.80,900.80Z" fill="#8b1a92" stroke="#fff" stroke-width="1.6" stroke-linejoin="round"/>
<text x="1296" y="1238.2" text-anchor="middle" font-size="21" fill="#fff">91.3%</text>
<circle cx="1770" cy="911.7" r="10.7" fill="#cc4125"/>
<circle cx="1770" cy="946.1" r="10.7" fill="#f0a036"/>
<circle cx="1770" cy="980.4" r="10.7" fill="#44972f"/>
<circle cx="1770" cy="1014.8" r="10.7" fill="#8b1a92"/>
<circle cx="1770" cy="1049.1" r="10.7" fill="#cccccc"/>
</svg>
</div>
</body></html>
